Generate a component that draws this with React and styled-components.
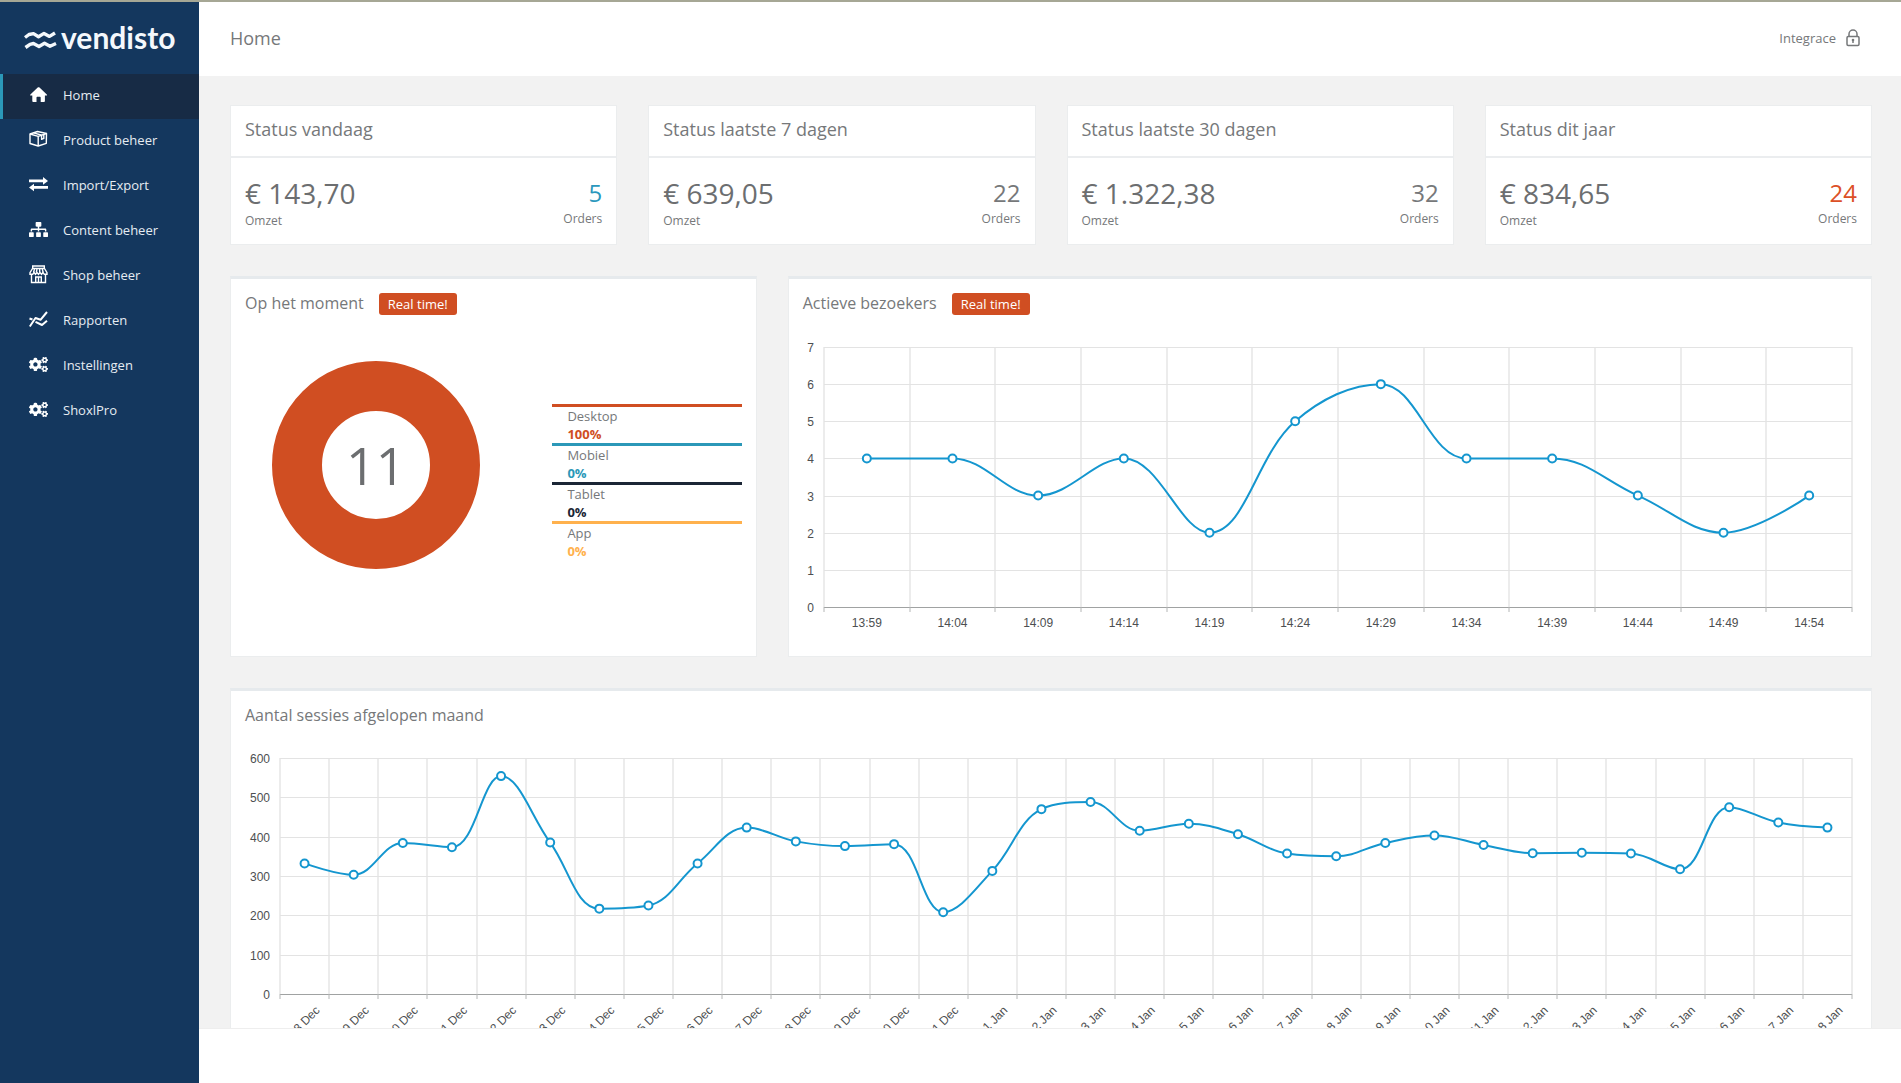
import React, { useLayoutEffect, useRef, useState } from 'react';
import styled, { createGlobalStyle } from 'styled-components';
import { FaCogs, FaSitemap } from 'react-icons/fa';

const GlobalStyle = createGlobalStyle`
  * {
    box-sizing: border-box;
  }

  body {
    margin: 0;
    background: #ffffff;
    color: #76787a;
    font-family: 'Open Sans', 'Noto Sans', sans-serif;
    font-size: 13px;
  }

  h1, h2, p, ul, dl, dd {
    margin: 0;
    padding: 0;
    font-weight: 400;
  }
`;

// Page shell: sidebar on the left, content column on the right
const Page = styled.div`
  display: grid;
  grid-template-columns: 199px minmax(0, 1fr);
  height: 100vh;
  border-top: 2px solid #a6a795;
`;

const Sidebar = styled.aside`
  background: #14375e;
`;

const Logo = styled.a`
  display: flex;
  align-items: center;
  gap: 4px;
  height: 72px;
  padding: 0 0 2px 24px;
  color: #f4f8fc;
  font-family: Lato, sans-serif;
  font-size: 30px;
  font-weight: 700;
  line-height: 36px;
  text-decoration: none;

  svg {
    width: 33px;
    height: 36px;
  }
`;

const NavList = styled.ul`
  list-style: none;
`;

const NavLink = styled.a`
  display: flex;
  align-items: center;
  gap: 15px;
  height: 45px;
  padding: 0 0 4px 26px;
  border-left: 3px solid ${({ $active }) => ($active ? '#2b98b8' : 'transparent')};
  background: ${({ $active }) => ($active ? '#172b45' : 'transparent')};
  color: #e6ecf2;
  text-decoration: none;

  svg {
    width: 19px;
    height: 19px;
    color: #ffffff;
  }

  &:hover {
    background: #172b45;
  }
`;

const Column = styled.div`
  display: flex;
  flex-direction: column;
  min-height: 0;
`;

const Header = styled.header`
  display: flex;
  flex: none;
  align-items: center;
  justify-content: space-between;
  height: 74px;
  padding: 0 41px 2px 31px;
`;

const PageTitle = styled.h1`
  font-size: 18px;
  line-height: 24px;
`;

const AccountLink = styled.a`
  display: flex;
  align-items: center;
  gap: 10px;
  color: inherit;
  text-decoration: none;

  svg {
    width: 14px;
    height: 18px;
  }
`;

const Content = styled.main`
  display: grid;
  flex: 1;
  grid-template-columns: repeat(12, minmax(0, 1fr));
  gap: 31px;
  align-content: start;
  min-height: 0;
  padding: 29px 29px 0 31px;
  overflow: hidden;
  background: #f2f2f2;
`;

const Footer = styled.footer`
  flex: none;
  height: 55px;
  border-top: 1px solid #eeeeee;
`;

const StatusCard = styled.section`
  grid-column: span 3;
  border: 1px solid #ebedee;
  background: #ffffff;
`;

const StatusTitle = styled.h2`
  padding: 11px 14px 15px;
  border-bottom: 2px solid #ebedef;
  font-size: 18px;
  line-height: 24px;
`;

const StatusBody = styled.div`
  display: flex;
  align-items: center;
  justify-content: space-between;
  padding: 16px 14px 14px;
`;

const Amount = styled.p`
  color: #6c6e70;
  font-size: 28px;
  line-height: 38px;
`;

const OrderBlock = styled.div`
  text-align: right;
`;

const orderColors = {
  blue: '#2b98bd',
  grey: '#76787a',
  red: '#dc5026',
};

const OrderCount = styled.p`
  color: ${({ $tone }) => orderColors[$tone]};
  font-size: 24px;
  line-height: 34px;
`;

const Caption = styled.p`
  font-size: 12px;
  line-height: 18px;
`;

const Panel = styled.section`
  grid-column: span ${({ $span }) => $span};
  padding: 13px 14px 16px;
  border: 1px solid #ebedee;
  border-top: 3px solid #e6eaed;
  background: #ffffff;
`;

const PanelHead = styled.div`
  display: flex;
  align-items: baseline;
  gap: 15px;
`;

const PanelTitle = styled.h2`
  font-size: 16px;
  line-height: 22px;
`;

const Badge = styled.span`
  padding: 0 9px;
  border-radius: 3px;
  background: #d04e22;
  color: #ffffff;
  line-height: 22px;
`;

const Visitors = styled.div`
  display: grid;
  grid-template-columns: 58fr 42fr;
  column-gap: 46px;
  align-items: start;
  padding-top: 46px;
`;

const Donut = styled.div`
  display: grid;
  place-items: center;
  width: 208px;
  height: 208px;
  margin: 0 auto;
  border: 50px solid #d04e22;
  border-radius: 50%;
  color: #6c6e70;
  font-size: 52px;
  line-height: 72px;
`;

const Legend = styled.dl`
  margin-top: 43px;
`;

const LegendItem = styled.div`
  padding-left: 15px;
  border-top: 3px solid ${({ $color }) => $color};
  line-height: 18px;

  dd {
    color: ${({ $color }) => $color};
    font-weight: 700;
  }
`;

const ChartBox = styled.div`
  svg {
    display: block;
    width: 100%;
    font-family: 'Liberation Sans', Arial, sans-serif;
    font-size: 12px;
    fill: #4d4f51;
  }
`;

const clamp = (value, a, b) => Math.max(Math.min(value, Math.max(a, b)), Math.min(a, b));

// Smoothed line which never swings past its own points
function smoothPath(points, smooth = 0.38) {
  let d = `M${points[0].x},${points[0].y}`;
  let out = points[0];

  for (let i = 1; i < points.length; i++) {
    const prev = points[i - 1];
    const cur = points[i];
    const next = points[i + 1];
    let into = cur;
    let nextOut = cur;

    if (next) {
      const lenPrev = Math.hypot(cur.x - prev.x, cur.y - prev.y);
      const lenNext = Math.hypot(next.x - cur.x, next.y - cur.y);
      const ratio = lenNext / (lenNext + lenPrev);
      const vx = (next.x - prev.x) * smooth;
      const vy = (next.y - prev.y) * smooth;
      const ox = clamp(cur.x + vx * ratio, next.x, cur.x);
      const oy = clamp(cur.y + vy * ratio, next.y, cur.y);
      const ix = clamp(cur.x - ((ox - cur.x) * lenPrev) / lenNext, prev.x, cur.x);
      const iy = clamp(cur.y - ((oy - cur.y) * lenPrev) / lenNext, prev.y, cur.y);
      into = { x: ix, y: iy };
      nextOut = {
        x: cur.x + ((cur.x - ix) * lenNext) / lenPrev,
        y: cur.y + ((cur.y - iy) * lenNext) / lenPrev,
      };
    }

    d += `C${out.x},${out.y} ${into.x},${into.y} ${cur.x},${cur.y}`;
    out = nextOut;
  }
  return d;
}

function LineChart({ title, data, max, step, plotHeight, height, left, rotate }) {
  const boxRef = useRef(null);
  const [width, setWidth] = useState(1000);

  useLayoutEffect(() => {
    const box = boxRef.current;
    const update = () => setWidth(box.clientWidth);
    update();
    const observer = new ResizeObserver(update);
    observer.observe(box);
    return () => observer.disconnect();
  }, []);

  const top = 32;
  const right = width - 5;
  const bottom = top + plotHeight;
  const slot = (right - left) / data.length;
  const toY = (value) => bottom - (value / max) * plotHeight;
  const points = data.map(([, value], i) => ({ x: left + slot * (i + 0.5), y: toY(value) }));
  const rows = Array.from({ length: max / step + 1 }, (_, i) => i * step);
  const edges = Array.from({ length: data.length + 1 }, (_, i) => Math.round(left + slot * i));

  return (
    <ChartBox ref={boxRef}>
      <svg height={height} role="img" aria-label={title}>
        {edges.map((x) => (
          <line key={x} x1={x} x2={x} y1={top} y2={bottom} stroke="#ececec" strokeWidth="2" />
        ))}
        {rows.map((value) => {
          const y = Math.round(toY(value)) + 0.5;
          return (
            <g key={value}>
              <line x1={left} x2={right} y1={y} y2={y} stroke={value ? '#e3e3e3' : '#a0a2a2'} />
              <text x={left - 10} y={y + 4} textAnchor="end">{value}</text>
            </g>
          );
        })}
        {edges.map((x) => (
          <line key={x} x1={x} x2={x} y1={bottom} y2={bottom + 5} stroke="#b4b6b6" />
        ))}
        <path d={smoothPath(points)} fill="none" stroke="#1496cf" strokeWidth="2" />
        {points.map(({ x, y }, i) => (
          <g key={data[i][0]}>
            <circle cx={x} cy={y} r="4" fill="#ffffff" stroke="#1496cf" strokeWidth="2" />
            {rotate ? (
              <text transform={`translate(${x + 16} ${bottom + 17}) rotate(-45)`} textAnchor="end">
                {data[i][0]}
              </text>
            ) : (
              <text x={x} y={bottom + 20} textAnchor="middle">{data[i][0]}</text>
            )}
          </g>
        ))}
      </svg>
    </ChartBox>
  );
}

const LogoMark = () => (
  <svg viewBox="0 0 33 36" fill="none" stroke="currentColor" strokeWidth="3.400" strokeLinejoin="round" aria-hidden="true">
    <path d="M1 18.500 5 15.500 9.500 14.600 14.500 17.700 20 14.400 25.500 17.400 31 14" />
    <path d="M1.500 28.500 6 25.300 9.500 24.500 15 27.500 20.500 24.300 26 27.200 32 24.500" />
  </svg>
);

const HomeIcon = () => (
  <svg viewBox="0 0 19 19" fill="currentColor" aria-hidden="true">
    <path d="M17.300 10.600h-1.400v5.500c0 .5-.3.900-.9.900h-3.300v-4.300c0-.6-.4-1-1-1H8.500c-.6 0-1 .4-1 1V17H4.200c-.6 0-.9-.4-.9-.9v-5.500H1.900c-.9 0-1-.5-.5-1.100l7.300-7c.5-.5 1.300-.5 1.800 0l7.300 7c.6.600.4 1.100-.5 1.100z" />
  </svg>
);

const BoxIcon = () => (
  <svg viewBox="0 0 19 19" fill="none" stroke="currentColor" strokeWidth="1.400" strokeLinejoin="round" aria-hidden="true">
    <path d="M1 4 8.500 1.500 17.500 3.500 17.300 13.300 9.200 16 1 13.500z" />
    <path d="M1 4 9.200 6.300 17.500 3.500M9.200 6.300V16M4.500 2.900l8.600 2.300M12.600 5.400v4l2.200-1V4.500" />
  </svg>
);

const ExchangeIcon = () => (
  <svg viewBox="0 0 19 19" fill="currentColor" aria-hidden="true">
    <path d="M0 4.500h14V2l5 3.900-5 3.800V7.200H0zM19 11H5V8.700L0 12.500l5 3.800V13.700h14z" />
  </svg>
);

const ShopIcon = () => (
  <svg viewBox="0 0 19 19" fill="none" stroke="currentColor" strokeWidth="1.400" aria-hidden="true">
    <path d="M3.700 1h11.600v2.500H3.700zM3.500 3.500 1 7.700v1.600h2.700L5 7.500l1.500 1.800L8 7.500l1.500 1.800L11 7.500l1.500 1.800L14 7.500l1.300 1.800H18V7.700l-2.500-4.200M2.500 9.300V17.500h14V9.300M6.700 17.500V12h5.600v5.500M9.500 12v5.500" />
    <path d="M5.500 4 4.500 7.500M8 4 7.300 7.500M10.700 4v3.500M13.300 4l.8 3.500" />
  </svg>
);

const ReportIcon = () => (
  <svg viewBox="0 0 19 19" fill="none" stroke="currentColor" strokeWidth="2" strokeLinejoin="round" aria-hidden="true">
    <path d="M.8 16.500 6.500 8l5 1.800L18 2" />
    <path d="M.5 8.500 3.500 9.500M6.500 11.800 13 15l5-4.200" />
  </svg>
);

const LockIcon = () => (
  <svg viewBox="0 0 14 18" fill="none" stroke="currentColor" strokeWidth="1.500" aria-hidden="true">
    <path d="M3 7.500V5a4 4 0 0 1 8 0v2.500" />
    <rect x="1" y="7.500" width="12" height="9" rx="1.200" />
    <circle cx="7" cy="11" r="1.300" fill="currentColor" stroke="none" />
    <path d="M7 11v3" />
  </svg>
);

const navItems = [
  { label: 'Home', icon: HomeIcon, active: true },
  { label: 'Product beheer', icon: BoxIcon },
  { label: 'Import/Export', icon: ExchangeIcon },
  { label: 'Content beheer', icon: FaSitemap },
  { label: 'Shop beheer', icon: ShopIcon },
  { label: 'Rapporten', icon: ReportIcon },
  { label: 'Instellingen', icon: FaCogs },
  { label: 'ShoxlPro', icon: FaCogs },
];

const statuses = [
  { title: 'Status vandaag', amount: '€ 143,70', orders: 5, tone: 'blue' },
  { title: 'Status laatste 7 dagen', amount: '€ 639,05', orders: 22, tone: 'grey' },
  { title: 'Status laatste 30 dagen', amount: '€ 1.322,38', orders: 32, tone: 'grey' },
  { title: 'Status dit jaar', amount: '€ 834,65', orders: 24, tone: 'red' },
];

const devices = [
  { name: 'Desktop', share: '100%', color: '#d04e22' },
  { name: 'Mobiel', share: '0%', color: '#2b98b8' },
  { name: 'Tablet', share: '0%', color: '#1b2635' },
  { name: 'App', share: '0%', color: '#ffb14d' },
];

const visitors = [
  ['13:59', 4], ['14:04', 4], ['14:09', 3], ['14:14', 4], ['14:19', 2], ['14:24', 5],
  ['14:29', 6], ['14:34', 4], ['14:39', 4], ['14:44', 3], ['14:49', 2], ['14:54', 3],
];

// 18 Dec up to and including 18 Jan
const sessions = [
  332, 303, 384, 373, 554, 385, 217, 225, 332, 423, 388, 376, 381, 208, 313, 470,
  488, 415, 433, 406, 357, 350, 384, 403, 379, 358, 359, 357, 317, 475, 436, 423,
].map((value, i) => [i < 14 ? `${18 + i} Dec` : `${i - 13} Jan`, value]);

function App() {
  return (
    <>
      <GlobalStyle />
      <Page>
        <Sidebar>
          <Logo href="#">
            <LogoMark />
            vendisto
          </Logo>
          <nav>
            <NavList>
              {navItems.map(({ label, icon: Icon, active }) => (
                <li key={label}>
                  <NavLink href="#" $active={active} aria-current={active ? 'page' : undefined}>
                    <Icon />
                    {label}
                  </NavLink>
                </li>
              ))}
            </NavList>
          </nav>
        </Sidebar>
        <Column>
          <Header>
            <PageTitle>Home</PageTitle>
            <AccountLink href="#">
              Integrace
              <LockIcon />
            </AccountLink>
          </Header>
          <Content>
            {statuses.map(({ title, amount, orders, tone }) => (
              <StatusCard key={title}>
                <StatusTitle>{title}</StatusTitle>
                <StatusBody>
                  <div>
                    <Amount>{amount}</Amount>
                    <Caption>Omzet</Caption>
                  </div>
                  <OrderBlock>
                    <OrderCount $tone={tone}>{orders}</OrderCount>
                    <Caption>Orders</Caption>
                  </OrderBlock>
                </StatusBody>
              </StatusCard>
            ))}
            <Panel $span={4}>
              <PanelHead>
                <PanelTitle>Op het moment</PanelTitle>
                <Badge>Real time!</Badge>
              </PanelHead>
              <Visitors>
                <Donut>11</Donut>
                <Legend>
                  {devices.map(({ name, share, color }) => (
                    <LegendItem key={name} $color={color}>
                      <dt>{name}</dt>
                      <dd>{share}</dd>
                    </LegendItem>
                  ))}
                </Legend>
              </Visitors>
            </Panel>
            <Panel $span={8}>
              <PanelHead>
                <PanelTitle>Actieve bezoekers</PanelTitle>
                <Badge>Real time!</Badge>
              </PanelHead>
              <LineChart
                title="Actieve bezoekers"
                data={visitors}
                max={7}
                step={1}
                plotHeight={260}
                height={325}
                left={21}
              />
            </Panel>
            <Panel $span={12}>
              <PanelHead>
                <PanelTitle>Aantal sessies afgelopen maand</PanelTitle>
              </PanelHead>
              <LineChart
                title="Aantal sessies afgelopen maand"
                data={sessions}
                max={600}
                step={100}
                plotHeight={236}
                height={325}
                left={35}
                rotate
              />
            </Panel>
          </Content>
          <Footer />
        </Column>
      </Page>
    </>
  );
}

export default App;
